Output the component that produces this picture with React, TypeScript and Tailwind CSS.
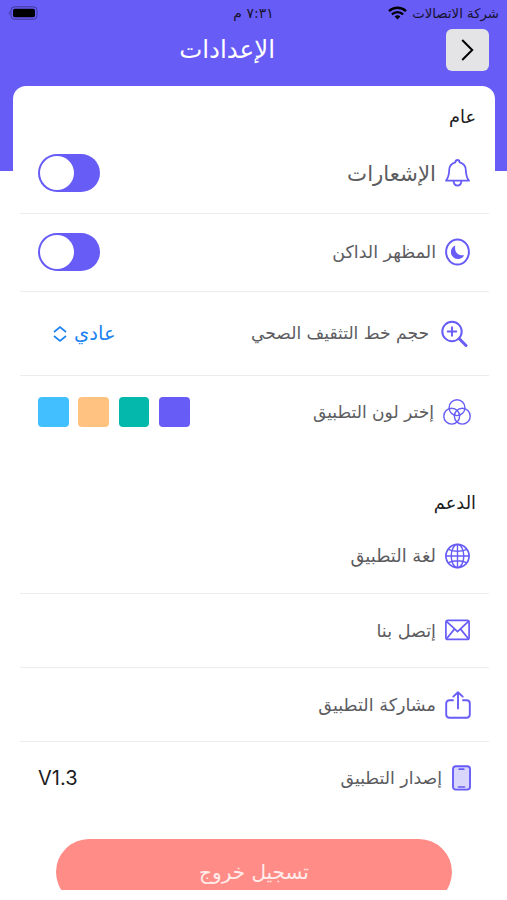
import type { ReactNode } from "react";
import { clsx } from "clsx";

const PURPLE = "#675cf6";

const BellIcon = () => (
  <svg width="25" height="28" viewBox="0 0 25 28" fill="none" stroke={PURPLE} strokeWidth="1.800" strokeLinejoin="round" strokeLinecap="round">
    <path d="M10.300 3.400c.2-1.600 1-2.400 2.200-2.400s2 .8 2.200 2.400c3.900 1 6 3.700 6.100 7.800.1 4.300.7 7.200 3.200 10.500H1c2.500-3.300 3.100-6.200 3.200-10.500.1-4.100 2.200-6.800 6.100-7.800Z" />
    <path d="M8.600 22.200c.3 2.900 1.700 4.400 3.900 4.400s3.600-1.500 3.900-4.400" />
  </svg>
);

const MoonIcon = () => (
  <svg width="25" height="28" viewBox="0 0 25 28" fill="none">
    <ellipse cx="12.500" cy="14" rx="11.400" ry="12.600" stroke={PURPLE} strokeWidth="2" />
    <path d="M10.300 7.600c-1.200 6 2.200 10.300 8.800 9.600-1.200 2.500-3.500 3.800-6 3.800-4 0-7.200-3-7.200-7 0-3 1.800-5.400 4.400-6.400Z" fill={PURPLE} />
  </svg>
);

const ZoomIcon = () => (
  <svg width="27" height="28" viewBox="0 0 27 28" fill="none" stroke={PURPLE} strokeLinecap="round">
    <circle cx="11" cy="11.500" r="9.700" strokeWidth="2" />
    <path d="M11 7.200v8.600M6.700 11.500h8.600" strokeWidth="1.900" />
    <path d="m18.300 18.800 6.700 6.700" strokeWidth="3" />
  </svg>
);

const CirclesIcon = () => (
  <svg width="28" height="26" viewBox="0 0 28 26" fill="none" stroke={PURPLE} strokeWidth="1.400">
    <circle cx="14" cy="8.700" r="7.900" />
    <circle cx="8.700" cy="17.200" r="7.900" />
    <circle cx="19.300" cy="17.200" r="7.900" />
  </svg>
);

const GlobeIcon = () => (
  <svg width="25" height="26" viewBox="0 0 25 26" fill="none" stroke={PURPLE} strokeWidth="1.400">
    <circle cx="12.500" cy="13" r="11.600" strokeWidth="1.700" />
    <ellipse cx="12.500" cy="13" rx="6.300" ry="11.600" />
    <path d="M12.500 1.400v23.200M1 13h23M3.200 6.300c5.600 2.400 13 2.400 18.600 0M3.200 19.700c5.600-2.400 13-2.400 18.600 0" />
  </svg>
);

const MailIcon = () => (
  <svg width="25" height="22" viewBox="0 0 25 22" fill="none" stroke={PURPLE} strokeWidth="1.700" strokeLinejoin="round">
    <rect x="0.900" y="1.400" width="23.200" height="19" rx="2" />
    <path d="m1.500 2.300 11 10.400 11-10.400M1.600 19.700l7.800-9.600M23.400 19.700l-7.800-9.600" />
  </svg>
);

const ShareIcon = () => (
  <svg width="26" height="28" viewBox="0 0 26 28" fill="none" stroke={PURPLE} strokeWidth="1.900" strokeLinecap="round" strokeLinejoin="round">
    <path d="M8 9.300H4.500C2.400 9.300 1.200 10.500 1.200 12.500v10.700c0 2.200 1.200 3.500 3.300 3.500h17c2.100 0 3.300-1.300 3.300-3.500V12.500c0-2-1.200-3.200-3.300-3.200H18" />
    <path d="M13 17.500V1.500M8.300 5.600 13 1.200l4.700 4.400" />
  </svg>
);

const PhoneIcon = () => (
  <svg width="19" height="26" viewBox="0 0 19 26" fill="none" stroke={PURPLE} strokeLinecap="round">
    <rect x="1" y="1.200" width="17" height="23.400" rx="2.800" fill="#d9d6fb" strokeWidth="1.900" />
    <path d="M7.300 4.200h4.400" strokeWidth="1.800" />
    <path d="M6.300 22h6.400" strokeWidth="1.300" />
  </svg>
);

const WifiIcon = () => (
  <svg width="19" height="14" viewBox="0 0 19 14" fill="none" stroke="#000" strokeWidth="2.300">
    <path d="M1 5.200c4.800-4.600 12.200-4.600 17 0M3.900 8.300c3.200-3 8-3 11.200 0" />
    <path d="m9.500 13.500-2.900-3a4.300 4.300 0 0 1 5.800 0Z" fill="#000" stroke="none" />
  </svg>
);

const BatteryIcon = () => (
  <svg width="30" height="14" viewBox="0 0 30 14" fill="none">
    <rect x="3" y="0.800" width="26" height="12.400" rx="3.600" stroke="#3f389a" strokeWidth="1" />
    <rect x="5" y="2.700" width="22" height="8.600" rx="1.800" fill="#000" />
    <path d="M1.600 5c-1.100.8-1.100 3.200 0 4Z" fill="#3f389a" />
  </svg>
);

const Toggle = () => (
  <button className="flex h-[38px] w-[62px] items-center justify-end rounded-full bg-[#675cf6] px-[2px]">
    <span className="size-[34px] rounded-full bg-white" />
  </button>
);

type RowProps = {
  icon: ReactNode;
  label: string;
  className?: string;
  labelClass?: string;
  children?: ReactNode;
};

const Row = ({ icon, label, className, labelClass, children }: RowProps) => (
  <div className={clsx("flex items-center justify-between border-[#ececee] pl-[18px]", className)}>
    <div className="flex items-center">
      {icon}
      <span className={clsx("pt-px whitespace-nowrap text-[#5c5c5f]", labelClass)}>{label}</span>
    </div>
    {children}
  </div>
);

const swatches = ["bg-[#675cf6]", "bg-[#04b9ab]", "bg-[#ffc280]", "bg-[#41bffe]"];

export default function App() {
  return (
    <div dir="rtl" className="h-[900px] w-[507px] overflow-hidden bg-white font-['DejaVu_Sans','Noto_Sans',sans-serif]">
      <header className="h-[171px] bg-[#675cf6]">
        {/* Status bar */}
        <div className="grid h-[26px] grid-cols-3 items-center px-2 text-[13.300px] text-[#16122f]">
          <div className="flex items-center gap-[5px]">
            <span className="pt-px whitespace-nowrap">شركة الاتصالات</span>
            <WifiIcon />
          </div>
          <span className="text-center text-[14px]">٧:٣١ م</span>
          <div className="flex justify-end">
            <BatteryIcon />
          </div>
        </div>

        {/* Title bar */}
        <div className="flex h-[47px] items-center pr-[18px]">
          <button className="flex h-[42px] w-[43px] items-center justify-center rounded-[6px] bg-[#e4e4e6]">
            <svg width="13" height="22" viewBox="0 0 13 22" fill="none" stroke="#000" strokeWidth="2">
              <path d="m1.200 1 10 10-10 10" />
            </svg>
          </button>
          <h1 className="mr-[171px] pt-px text-[24.500px] leading-none whitespace-nowrap text-white">الإعدادات</h1>
        </div>
      </header>

      <main className="relative mr-[12px] ml-[13px] -mt-[85px] h-[804px] overflow-hidden rounded-t-[13px] bg-white pr-[6px] pl-[7px]">
        <h2 className="flex h-[47px] items-center pt-[15px] pr-[13px] text-[17.800px] text-[#1c1c1e]">عام</h2>
        <Row icon={<BellIcon />} label="الإشعارات" className="h-[81px] border-b pr-[19px]" labelClass="mr-[9px] text-[21.300px]">
          <Toggle />
        </Row>
        <Row icon={<MoonIcon />} label="المظهر الداكن" className="h-[78px] border-b pr-[19px] pb-[2px]" labelClass="mr-[9px] text-[17.500px]">
          <Toggle />
        </Row>
        <Row icon={<ZoomIcon />} label="حجم خط التثقيف الصحي" className="h-[84px] border-b pr-[21px]" labelClass="mr-[12px] text-[17.100px]">
          <div className="flex items-center gap-[7px] pl-[15px] text-[#1b82f0]">
            <span className="text-[19.500px]">عادي</span>
            <svg width="14" height="16" viewBox="0 0 14 16" fill="none" stroke="currentColor" strokeWidth="1.700">
              <path d="m1 6 6-4.800L13 6M1 10l6 4.800L13 10" />
            </svg>
          </div>
        </Row>
        <Row icon={<CirclesIcon />} label="إختر لون التطبيق" className="h-[74px] pr-[18px] pb-[2px]" labelClass="mr-[9px] text-[17.100px]">
          <div className="flex gap-[9.500px]">
            {swatches.map(color => (
              <button key={color} className={clsx("size-[30.800px] rounded-[4px]", color)} />
            ))}
          </div>
        </Row>

        <h2 className="flex h-[69px] items-center pt-[38px] pr-[13px] text-[17.800px] text-[#1c1c1e]">الدعم</h2>
        <Row icon={<GlobeIcon />} label="لغة التطبيق" className="h-[75px] border-b pr-[19px]" labelClass="mr-[9px] text-[17.900px]" />
        <Row icon={<MailIcon />} label="إتصل بنا" className="h-[74px] border-b pr-[19px]" labelClass="mr-[9px] text-[17.600px]" />
        <Row icon={<ShareIcon />} label="مشاركة التطبيق" className="h-[74px] border-b pr-[18px]" labelClass="mr-[9px] text-[17.600px]" />
        <Row icon={<PhoneIcon />} label="إصدار التطبيق" className="h-[72px] pr-[18px]" labelClass="mr-[10px] text-[17.300px]">
          <span dir="ltr" className="font-[Inter,sans-serif] text-[20px] text-[#1c1c1e]">V1.3</span>
        </Row>

        <button className="mt-[25px] mr-[37px] flex h-[66px] w-[396px] items-center justify-center rounded-full bg-[#ff8c87] text-[20px] text-[#ffeceb]">
          تسجيل خروج
        </button>
      </main>
    </div>
  );
}
